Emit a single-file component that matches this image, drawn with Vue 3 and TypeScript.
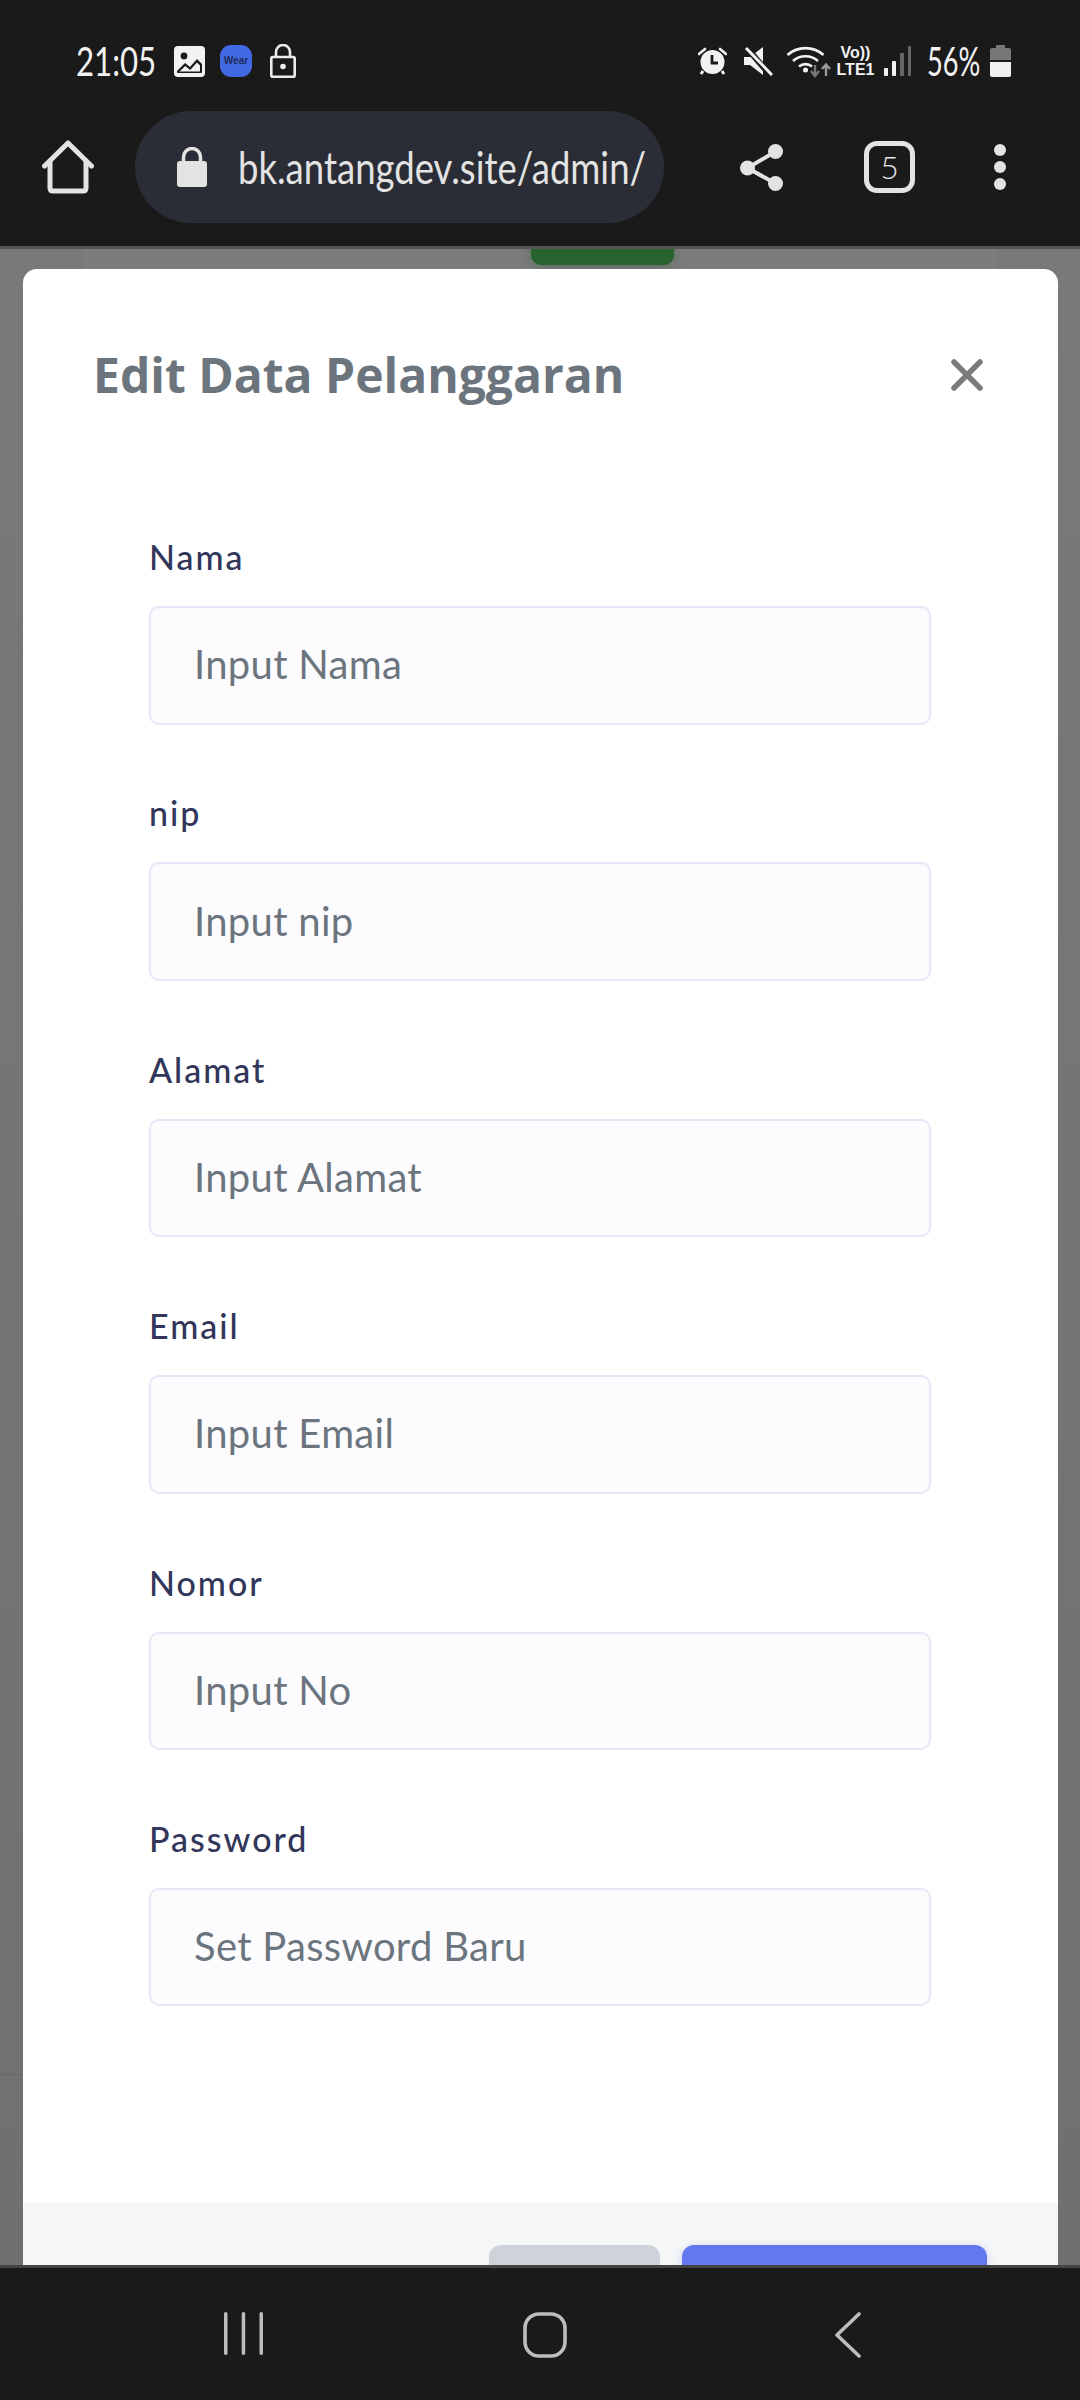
<script setup lang="ts">
interface Field {
  label: string
  placeholder: string
  type: string
}

const fields: Field[] = [
  { label: 'Nama', placeholder: 'Input Nama', type: 'text' },
  { label: 'nip', placeholder: 'Input nip', type: 'text' },
  { label: 'Alamat', placeholder: 'Input Alamat', type: 'text' },
  { label: 'Email', placeholder: 'Input Email', type: 'email' },
  { label: 'Nomor', placeholder: 'Input No', type: 'text' },
  { label: 'Password', placeholder: 'Set Password Baru', type: 'password' }
]
</script>

<template>
  <div class="screen">
    <header class="chrome">
      <div class="status">
        <span class="time"><span class="squeeze">21:05</span></span>
        <svg class="ic-image" width="31" height="31" viewBox="0 0 31 31">
          <rect width="31" height="31" rx="4" fill="#f2f2f2" />
          <circle cx="10" cy="10" r="3.4" fill="#1a1a1a" />
          <path d="M3 25l8-8 5 4 7-8 5 5v8q0 1-1 1H4q-1 0-1-1z" fill="#1a1a1a" />
          <path d="M5.500 25.500l5.700-5.500 5 4 6.800-7.500 3 3v6z" fill="#f2f2f2" />
        </svg>
        <span class="wear">Wear</span>
        <svg class="ic-lock" width="26" height="34" viewBox="0 0 26 34" fill="none" stroke="#ececec" stroke-width="2.600">
          <rect x="1.300" y="13" width="23.400" height="19.700" rx="1.500" />
          <path d="M6 13V8a7 7 0 0 1 14 0v5" />
          <circle cx="13" cy="22.500" r="2.800" fill="#ececec" stroke="none" />
        </svg>
        <span class="spacer"></span>
        <svg class="ic-alarm" width="29" height="28" viewBox="0 0 29 28">
          <circle cx="14.500" cy="15" r="12" fill="#f2f2f2" />
          <path d="M1 7l6-5M28 7l-6-5" stroke="#f2f2f2" stroke-width="2.600" stroke-linecap="round" />
          <path d="M5 24l-2 3M24 24l2 3" stroke="#f2f2f2" stroke-width="3" />
          <path d="M14 8v8h6" stroke="#1a1a1a" stroke-width="2.800" fill="none" />
        </svg>
        <svg class="ic-mute" width="30" height="30" viewBox="0 0 30 30">
          <path d="M1 11h6l13-10v28L7 19H1z" fill="#f2f2f2" />
          <path d="M3 1l25 29" stroke="#1a1a1a" stroke-width="6" />
          <path d="M3 2l26 27" stroke="#f2f2f2" stroke-width="3" />
        </svg>
        <svg class="ic-wifi" width="46" height="34" viewBox="0 0 46 34" fill="none">
          <path d="M1.500 11a27 27 0 0 1 36 0M7 17a19 19 0 0 1 25 0M13 22.500a10 10 0 0 1 13 0" stroke="#f2f2f2" stroke-width="2.600" />
          <circle cx="19.500" cy="26" r="2.500" fill="#f2f2f2" />
          <path d="M29 21v10m-4-4l4 5 4-5" stroke="#777" stroke-width="2.400" />
          <path d="M40 32V21m-4 4l4-4.500 4 4.500" stroke="#999" stroke-width="2.400" />
        </svg>
        <span class="volte"><span>Vo))</span><span>LTE1</span></span>
        <svg class="ic-signal" width="27" height="30" viewBox="0 0 27 30">
          <rect x="0" y="22" width="4" height="8" rx="1" fill="#f2f2f2" />
          <rect x="8" y="15" width="4" height="15" rx="1" fill="#f2f2f2" />
          <rect x="16" y="7" width="4" height="23" rx="1" fill="#666" />
          <rect x="24" y="0" width="3" height="30" rx="1" fill="#666" />
        </svg>
        <span class="battery-text"><span class="squeeze">56%</span></span>
        <svg class="ic-battery" width="21" height="32" viewBox="0 0 21 32">
          <path d="M6 0h9v3h4q2 0 2 2v10H0V5q0-2 2-2h4z" fill="#777" />
          <path d="M0 17h21v13q0 2-2 2H2q-2 0-2-2z" fill="#f0f0f0" />
        </svg>
      </div>
      <div class="toolbar">
        <svg class="ic-home" width="52" height="54" viewBox="0 0 52 54" fill="none" stroke="#e3e3e3" stroke-width="5" stroke-linejoin="round" stroke-linecap="round">
          <path d="M2.500 26L26 3l23.500 23" />
          <path d="M8 22v26q0 3 3 3h30q3 0 3-3V22" />
        </svg>
        <div class="omnibox">
          <svg class="ic-secure" width="30" height="40" viewBox="0 0 30 40">
            <path d="M6.500 15V10a8.500 8.500 0 0 1 17 0v5" fill="none" stroke="#e3e3e3" stroke-width="3.500" />
            <rect y="14" width="30" height="26" rx="3" fill="#e3e3e3" />
          </svg>
          <span class="url">bk.antangdev.site/admin/</span>
        </div>
        <svg class="ic-share" width="43" height="47" viewBox="0 0 43 47" fill="#e3e3e3">
          <circle cx="7.500" cy="24" r="7.500" />
          <circle cx="35.500" cy="7.500" r="7.500" />
          <circle cx="35.500" cy="39.500" r="7.500" />
          <path d="M7.500 24L35.500 7.500M7.500 24l28 15.500" stroke="#e3e3e3" stroke-width="4" />
        </svg>
        <span class="tabs">5</span>
        <svg class="ic-more" width="12" height="46" viewBox="0 0 12 46" fill="#e3e3e3">
          <circle cx="6" cy="6" r="6" />
          <circle cx="6" cy="23" r="6" />
          <circle cx="6" cy="40" r="6" />
        </svg>
      </div>
    </header>

    <main class="viewport">
      <div class="page-card">
        <div class="page-button"></div>
      </div>
      <div class="page-rule"></div>

      <section class="modal">
        <div class="modal-head">
          <h5>Edit Data Pelanggaran</h5>
          <svg width="32" height="32" viewBox="0 0 32 32" stroke="#7b7b7b" stroke-width="5.500" stroke-linecap="round">
            <path d="M3 3l26 26M29 3L3 29" />
          </svg>
        </div>
        <form class="modal-form">
          <div v-for="field in fields" :key="field.label" class="field">
            <label>{{ field.label }}</label>
            <input :type="field.type" :placeholder="field.placeholder" />
          </div>
        </form>
        <div class="modal-foot">
          <button type="button" class="btn btn-close"></button>
          <button type="button" class="btn btn-save"></button>
        </div>
      </section>
    </main>

    <nav class="navbar">
      <svg width="39" height="43" viewBox="0 0 39 43" fill="#bdbdbd">
        <rect width="3.500" height="43" rx="1.700" />
        <rect x="17.700" width="3.500" height="43" rx="1.700" />
        <rect x="35.500" width="3.500" height="43" rx="1.700" />
      </svg>
      <svg class="ic-recents" width="44" height="46" viewBox="0 0 44 46" fill="none" stroke="#bdbdbd" stroke-width="3.600">
        <rect x="2" y="2" width="40" height="42" rx="14" />
      </svg>
      <svg width="26" height="46" viewBox="0 0 26 46" fill="none" stroke="#bdbdbd" stroke-width="3.600" stroke-linecap="round" stroke-linejoin="round">
        <path d="M24 2L2 23l22 21" />
      </svg>
    </nav>
  </div>
</template>

<style>
  html,
  body {
    margin: 0;
    background: #1a1a1a;
  }
</style>

<style scoped>
  .screen {
    width: 1080px;
    height: 2400px;
    display: flex;
    flex-direction: column;
    overflow: hidden;
    font-family: Lato, 'Noto Sans', sans-serif;
  }

  /* phone status bar + browser toolbar */
  .chrome {
    height: 249px;
    box-sizing: border-box;
    flex: none;
    background: #1a1a1a;
    border-bottom: 3px solid #555;
  }
  .status {
    height: 111px;
    box-sizing: border-box;
    padding: 44px 69px 0 76px;
    display: flex;
    align-items: flex-start;
    color: #f2f2f2;
  }
  .squeeze {
    display: inline-block;
    transform-origin: left center;
    font-weight: 400;
    white-space: nowrap;
  }
  .time {
    font-size: 40px;
    line-height: 34px;
    width: 98px;
  }
  .time .squeeze {
    transform: scaleX(0.78);
  }
  .ic-image {
    margin-top: 2px;
  }
  .wear {
    width: 32px;
    height: 32px;
    margin: 1px 18px 0 15px;
    border-radius: 11px;
    background: #4169e1;
    color: #1c2a5a;
    font-family: 'Liberation Sans', sans-serif;
    font-size: 10px;
    font-weight: 700;
    line-height: 32px;
    text-align: center;
  }
  .spacer {
    flex: 1;
  }
  .ic-alarm {
    margin-top: 3px;
  }
  .ic-mute {
    margin: 2px 0 0 16px;
  }
  .ic-wifi {
    margin-left: 13px;
  }
  .volte {
    width: 39px;
    margin-left: 4px;
    display: flex;
    flex-direction: column;
    align-items: center;
    font-family: 'Liberation Sans', sans-serif;
    font-size: 16px;
    font-weight: 700;
    line-height: 17px;
  }
  .ic-signal {
    margin: 2px 0 0 9px;
  }
  .battery-text {
    margin-left: 16px;
    width: 63px;
    font-size: 40px;
    line-height: 34px;
  }
  .battery-text .squeeze {
    transform: scaleX(0.68);
  }
  .ic-battery {
    margin-top: 1px;
  }

  .toolbar {
    height: 135px;
    display: flex;
    align-items: center;
    padding: 0 74px 23px 42px;
    box-sizing: border-box;
  }
  .omnibox {
    width: 529px;
    height: 112px;
    margin-left: 41px;
    box-sizing: border-box;
    padding-left: 42px;
    border-radius: 56px;
    background: #2a2d35;
    display: flex;
    align-items: center;
    gap: 31px;
    flex: none;
  }
  .ic-secure {
    flex: none;
  }
  .url {
    display: inline-block;
    transform: scaleX(0.83);
    transform-origin: left center;
    color: #e3e3e3;
    font-size: 44px;
    font-weight: 400;
    white-space: nowrap;
  }
  .ic-share {
    margin-left: 76px;
  }
  .tabs {
    width: 51px;
    height: 52px;
    margin-left: 81px;
    box-sizing: border-box;
    border: 5px solid #e3e3e3;
    border-radius: 13px;
    color: #e3e3e3;
    font-size: 32px;
    font-weight: 300;
    line-height: 42px;
    text-align: center;
  }
  .ic-more {
    margin-left: 79px;
  }

  /* dimmed page + modal */
  .viewport {
    position: relative;
    flex: 1;
    overflow: hidden;
    background: linear-gradient(#787979, #6f7072);
  }
  .page-card {
    position: absolute;
    top: 0;
    left: 84px;
    width: 912px;
    height: 20px;
    background: #7c7c7c;
  }
  .page-button {
    position: absolute;
    top: -6px;
    left: 447px;
    width: 143px;
    height: 22px;
    border-radius: 0 0 10px 10px;
    background: #27622f;
    box-shadow: 0 0 12px #27622f88;
  }
  .page-rule {
    position: absolute;
    top: 1825px;
    left: 0;
    width: 23px;
    height: 1px;
    background: #666769;
  }
  .modal {
    position: relative;
    margin: 20px 22px 0 23px;
    border-radius: 14px 14px 0 0;
    background: #fff;
  }
  .modal-head {
    display: flex;
    justify-content: space-between;
    align-items: center;
    padding: 73px 75px 129px 70px;
  }
  .modal-head h5 {
    margin: 0;
    color: #6c757d;
    font-family: 'Open Sans', Lato, sans-serif;
    font-size: 48px;
    font-weight: 700;
    line-height: 66px;
  }
  .modal-form {
    padding: 0 127px 127.600px 126px;
  }
  .field {
    margin-bottom: 68.900px;
  }
  .field label {
    display: block;
    height: 40px;
    margin-bottom: 29px;
    color: #32365a;
    font-size: 34px;
    font-weight: 500;
    line-height: 40px;
    letter-spacing: 2px;
  }
  .field input {
    display: block;
    width: 100%;
    height: 118.500px;
    box-sizing: border-box;
    padding: 0 43px 2px;
    border: 2px solid #e6e7f6;
    border-radius: 10px;
    outline: none;
    background: #fcfcff;
    color: #6c757d;
    font-family: inherit;
    font-size: 40px;
    letter-spacing: 0.3px;
  }
  .field input::placeholder {
    color: #6c757d;
    opacity: 1;
  }
  .modal-foot {
    height: 200px;
    box-sizing: border-box;
    padding: 42px 71px 0 0;
    display: flex;
    justify-content: flex-end;
    gap: 22px;
    background: #f5f7f7;
  }
  .btn {
    height: 90px;
    padding: 0;
    border: 0;
    border-radius: 12px;
  }
  .btn-close {
    width: 171px;
    background: #ced2d9;
  }
  .btn-save {
    width: 305px;
    background: #6577ee;
    box-shadow: 0 2px 10px #6577ee55;
  }

  .navbar {
    height: 135px;
    flex: none;
    box-sizing: border-box;
    border-top: 3px solid #444;
    padding: 44px 219px 0 224px;
    display: flex;
    justify-content: space-between;
    align-items: flex-start;
    background: #1a1a1a;
    position: relative;
  }
  .ic-recents {
    margin-right: 8px;
  }
</style>
